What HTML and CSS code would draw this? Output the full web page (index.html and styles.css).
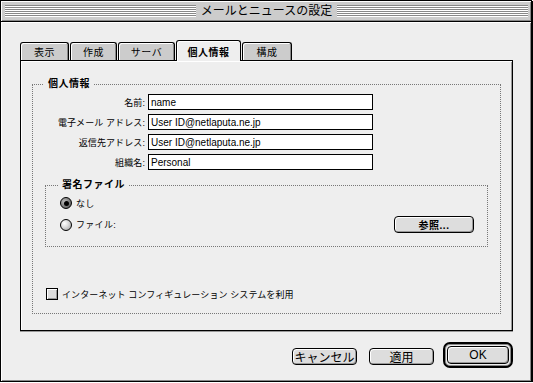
FILE: index.html
```html
<!DOCTYPE html>
<html lang="ja">
<head>
    <meta charset="UTF-8">
    <title>メールとニュースの設定</title>
    <link rel="stylesheet" href="styles.css">
</head>
<body>
    <div class="window">
        <div class="titlebar">
            <span class="stripes"></span>
            <span class="title">メールとニュースの設定</span>
            <span class="stripes"></span>
        </div>
        <div class="content">
            <div class="tabs">
                <div class="tab t1">表示</div>
                <div class="tab t2">作成</div>
                <div class="tab t3">サーバ</div>
                <div class="tab t4 active">個人情報</div>
                <div class="tab t5">構成</div>
            </div>
            <div class="panel">
                <fieldset class="group">
                    <legend>個人情報</legend>
                    <div class="fields">
                        <div class="row"><label>名前:</label><input type="text" value="name"></div>
                        <div class="row"><label>電子メール アドレス:</label><input type="text" value="User ID@netlaputa.ne.jp"></div>
                        <div class="row"><label>返信先アドレス:</label><input type="text" value="User ID@netlaputa.ne.jp"></div>
                        <div class="row"><label>組織名:</label><input type="text" value="Personal"></div>
                    </div>
                    <fieldset class="group sub">
                        <legend>署名ファイル</legend>
                        <div class="opts">
                            <div class="opt"><span class="radio on"></span>なし</div>
                            <div class="opt"><span class="radio"></span>ファイル:<button class="btn browse">参照...</button></div>
                        </div>
                    </fieldset>
                    <div class="check"><span class="box"></span>インターネット コンフィギュレーション システムを利用</div>
                </fieldset>
            </div>
            <div class="buttons">
                <button class="btn cancel">キャンセル</button>
                <button class="btn apply">適用</button>
                <div class="ring"><button class="btn ok">OK</button></div>
            </div>
        </div>
    </div>
</body>
</html>
```

FILE: styles.css
```css
* {
    box-sizing: border-box;
}
body {
    margin: 0;
    background: #fff;
    font-family: "Liberation Sans", "Noto Sans CJK JP", sans-serif;
    font-size: 10px;
    color: #000;
}
.window {
    width: 532px;
    height: 382px;
    border: 1px solid #000;
    box-shadow: 1px 1px 0 #000;
    display: flex;
    flex-direction: column;
}
.titlebar {
    height: 21px;
    flex: none;
    background: #ccc;
    border-bottom: 1px solid #000;
    box-shadow: inset 1px 1px 0 #fff, inset -1px -1px 0 #888;
    display: flex;
    align-items: center;
    padding: 0 3px 0 4px;
}
.stripes {
    flex: 1;
    height: 12px;
    background: repeating-linear-gradient(#888 0 1px, #fff 1px 2px);
}
.title {
    padding: 0 5px;
    font-size: 12px;
    line-height: 14px;
}
.content {
    flex: 1;
    background: #eee;
    box-shadow: inset 1px 1px 0 #fff, inset -1px -1px 0 #888;
    padding: 18px 18px 0 19px;
}
.tabs {
    display: flex;
    align-items: flex-end;
    gap: 1px;
    height: 20px;
}
.tab {
    height: 18px;
    border: 1px solid #000;
    border-bottom: none;
    border-radius: 3px 3px 0 0;
    background: #ccc;
    box-shadow: inset 1px 1px 0 #fff, inset -1px 0 0 #888;
    display: flex;
    align-items: center;
    justify-content: center;
    letter-spacing: 0.5px;
}
.t1 { width: 49px; }
.t2 { width: 47px; }
.t3 { width: 57px; }
.t4 { width: 65px; }
.t5 { width: 50px; }
.tab.active {
    height: 21px;
    margin-bottom: -1px;
    background: #eee;
    font-weight: bold;
    position: relative;
    z-index: 1;
    box-shadow: inset 1px 1px 0 #fff;
}
.panel {
    height: 271px;
    border: 1px solid #000;
    box-shadow: inset 1px 1px 0 #fff, inset -1px 0 0 #999, 0 1px 0 #999;
    padding: 17px 11px 0 11px;
}
.group {
    margin: 0;
    padding: 0;
    border: 1px dotted #777;
    height: 236px;
    min-width: 0;
}
.group legend {
    margin-left: 11px;
    padding: 0 4px;
    font-weight: bold;
    line-height: 12px;
    letter-spacing: 0.5px;
}
.fields {
    padding-top: 4px;
    display: flex;
    flex-direction: column;
    gap: 4px;
}
.row {
    display: flex;
    align-items: center;
    height: 16px;
}
.row label {
    width: 115px;
    text-align: right;
    padding-right: 3px;
    font-size: 9px;
    letter-spacing: 0.1px;
}
.row input {
    width: 225px;
    height: 16px;
    margin: 0;
    border: 1px solid #000;
    padding: 0 2px;
    background: #fff;
    font: 10px "Liberation Sans", sans-serif;
    color: #000;
}
.group.sub {
    margin: 9px 12px 0;
    height: 68px;
}
.group.sub legend {
    margin-left: 12px;
}
.opts {
    padding: 5px 13px 0 14px;
}
.opt {
    display: flex;
    align-items: center;
    gap: 4px;
    height: 14px;
    font-size: 9px;
    letter-spacing: 0.3px;
}
.opt + .opt {
    margin-top: 6px;
    height: 17px;
}
.radio {
    width: 12px;
    height: 12px;
    border: 1px solid #000;
    border-radius: 50%;
    background: radial-gradient(circle at 35% 35%, #fff 0, #ddd 40%, #999 100%);
    display: flex;
    align-items: center;
    justify-content: center;
}
.radio.on {
    background: radial-gradient(circle at 35% 35%, #bbb 0, #777 60%, #444 100%);
}
.radio.on::after {
    content: "";
    width: 5px;
    height: 5px;
    border-radius: 50%;
    background: #000;
}
.btn {
    margin: 0;
    padding: 0;
    height: 17px;
    border: 1px solid #000;
    border-radius: 4px;
    background: #ddd;
    box-shadow: inset 1px 1px 0 #fff, inset -1px -1px 0 #999;
    font-family: "Liberation Sans", "Noto Sans CJK JP", sans-serif;
    font-size: 12px;
    color: #000;
    display: flex;
    align-items: center;
    justify-content: center;
}
.btn.browse {
    margin-left: auto;
    width: 80px;
    font-size: 10px;
    font-weight: bold;
    letter-spacing: 0.5px;
}
.check {
    margin: 41px 0 0 13px;
    display: flex;
    align-items: center;
    gap: 4px;
    height: 12px;
    font-size: 9px;
    letter-spacing: 0.1px;
}
.box {
    width: 12px;
    height: 12px;
    border: 1px solid #000;
    background: #ddd;
    box-shadow: inset 1px 1px 0 #fff, inset -1px -1px 0 #999;
}
.buttons {
    display: flex;
    justify-content: flex-end;
    align-items: flex-start;
    padding-top: 11px;
}
.cancel {
    width: 65px;
    margin-top: 6px;
}
.apply {
    width: 65px;
    margin: 6px 9px 0 12px;
}
.ring {
    width: 70px;
    height: 26px;
    border: 2px solid #000;
    border-radius: 7px;
    box-shadow: inset 0 0 0 1px #888;
    padding: 2px;
}
.ok {
    width: 62px;
    height: 18px;
}
```
